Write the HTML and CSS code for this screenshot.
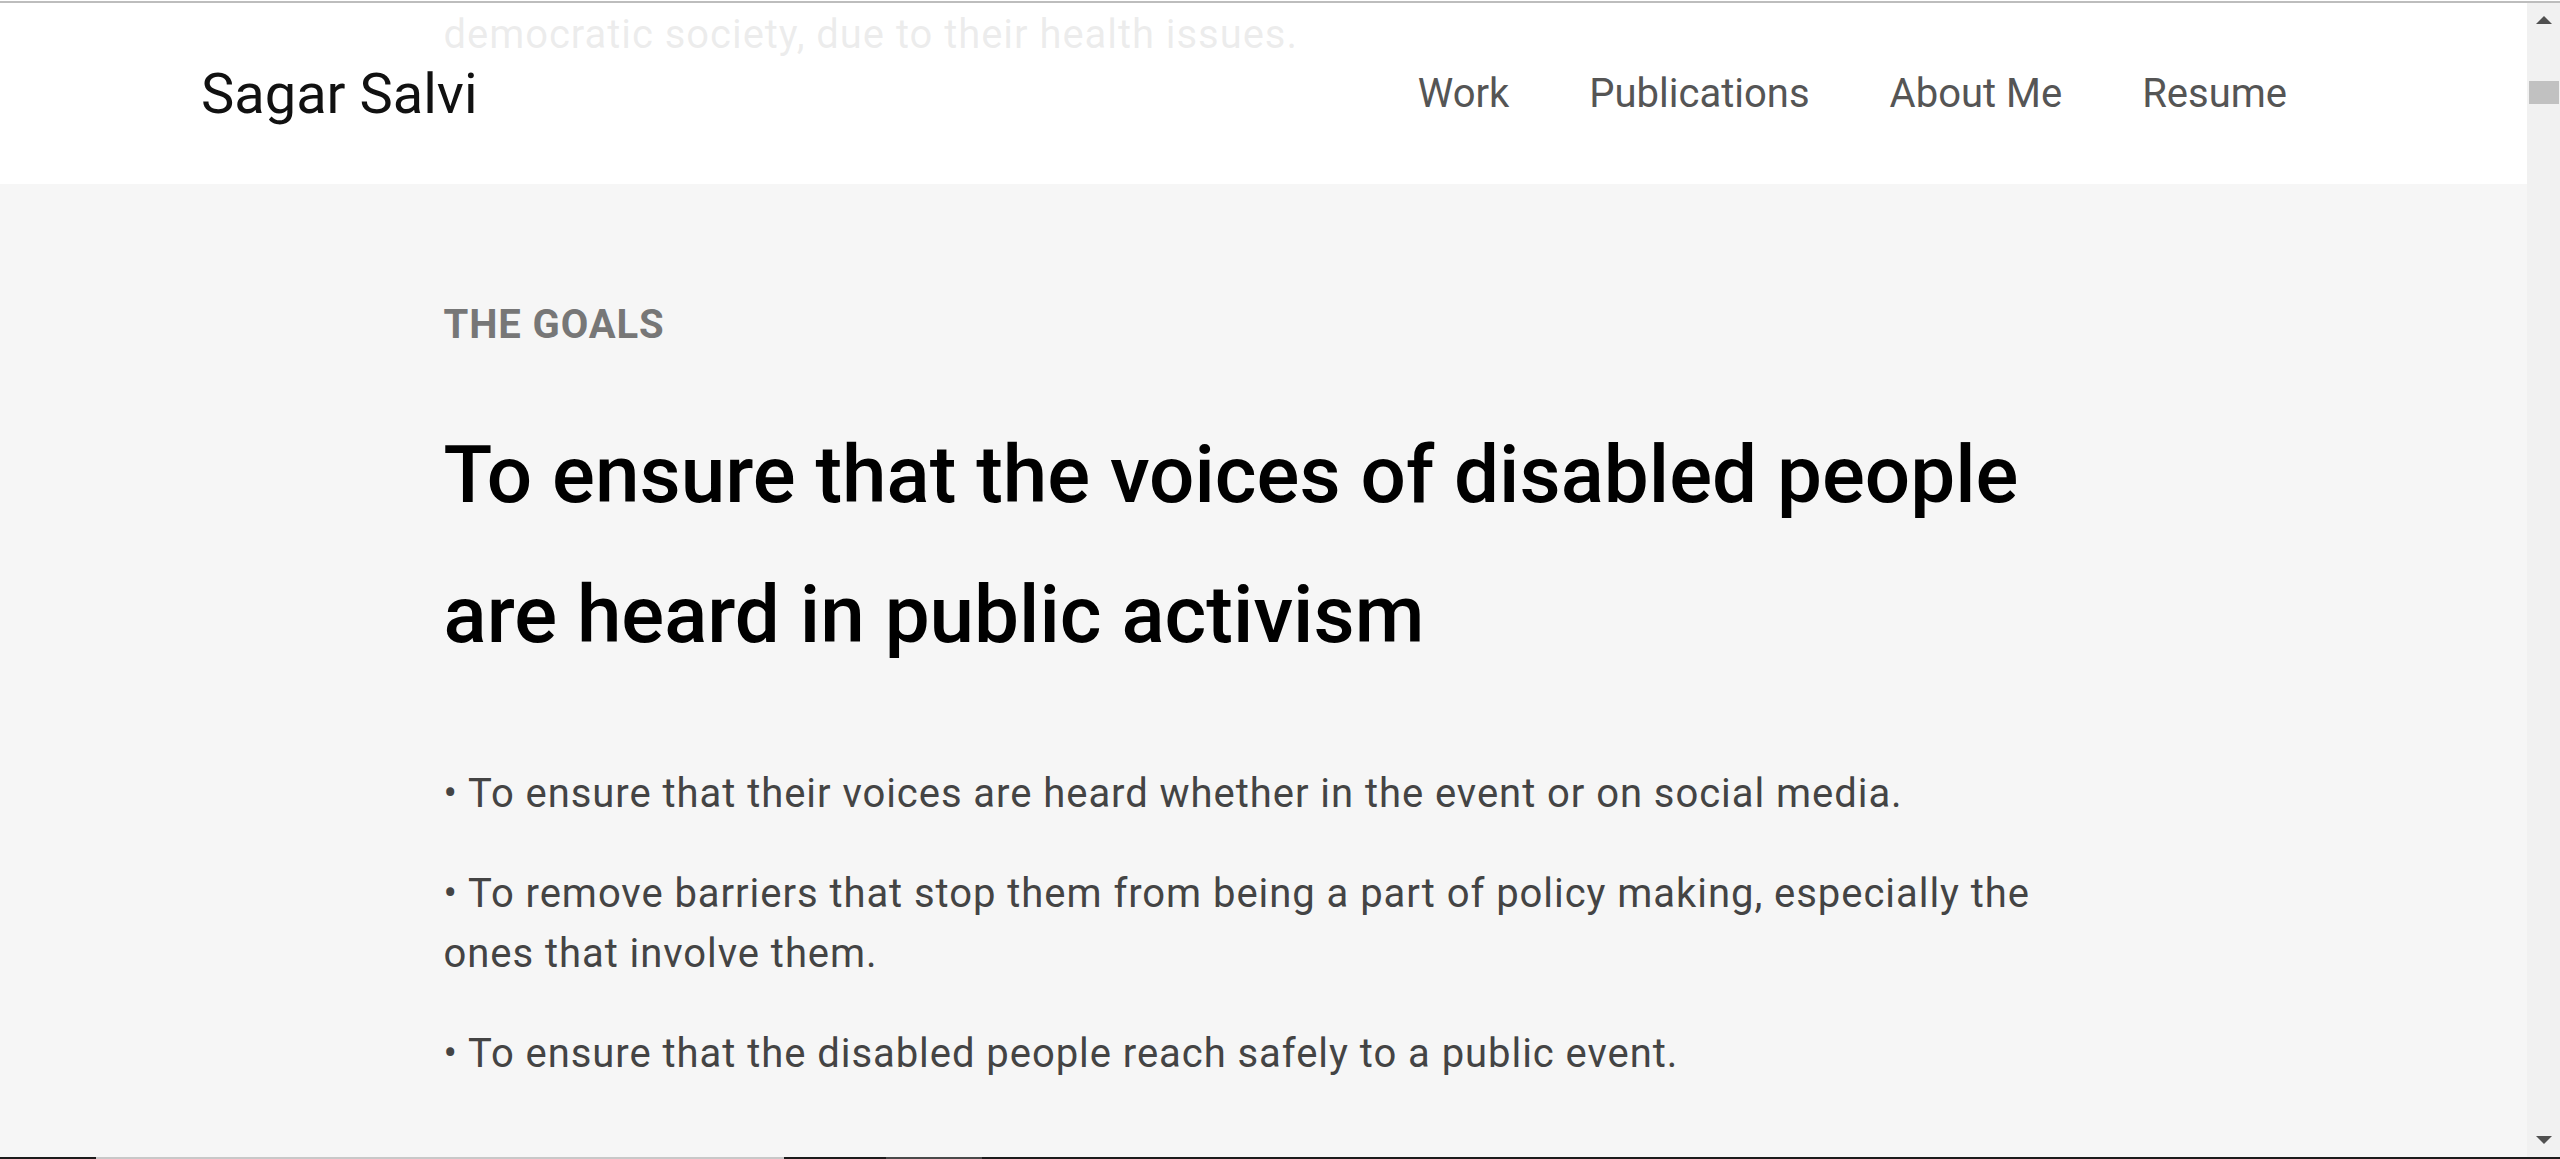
FILE: index.html
```html
<!DOCTYPE html>
<html lang="en">
<head>
<meta charset="utf-8">
<title>Sagar Salvi</title>
<link rel="stylesheet" href="styles.css">
</head>
<body>
<div class="topline"></div>
<div class="window">
  <div class="viewport">
    <header class="site-header">
      <a class="logo" href="#">Sagar Salvi</a>
      <nav class="nav">
        <a href="#">Work</a>
        <a href="#">Publications</a>
        <a href="#">About Me</a>
        <a href="#">Resume</a>
      </nav>
    </header>
    <section class="prev-section">
      <div class="container">
        <p class="body-text">democratic society, due to their health issues.</p>
      </div>
    </section>
    <section class="goals">
      <div class="container">
        <h3 class="eyebrow">THE GOALS</h3>
        <h2 class="headline">To ensure that the voices of disabled people are heard in public activism</h2>
        <div class="bullets">
          <p class="body-text">• To ensure that their voices are heard whether in the event or on social media.</p>
          <p class="body-text">• To remove barriers that stop them from being a part of policy making, especially the ones that involve them.</p>
          <p class="body-text">• To ensure that the disabled people reach safely to a public event.</p>
        </div>
      </div>
    </section>
  </div>
  <div class="scrollbar">
    <span class="arrow arrow-up"></span>
    <span class="thumb"></span>
    <span class="arrow arrow-down"></span>
  </div>
</div>
<div class="taskbar">
  <span class="seg seg-dark1"></span>
  <span class="seg seg-light"></span>
  <span class="seg seg-dark2"></span>
  <span class="seg seg-gray"></span>
  <span class="seg seg-dark3"></span>
</div>
</body>
</html>
```
FILE: styles.css
```css
* { box-sizing: border-box; }
html, body {
  margin: 0;
  padding: 0;
  width: 2560px;
  height: 1159px;
  overflow: hidden;
}
body {
  font-family: Roboto, "Liberation Sans", Arial, sans-serif;
  background: #ffffff;
}
.topline {
  height: 3px;
  border-top: 1px solid #ffffff;
  background: #bdbdbd;
}
.window {
  display: flex;
  height: 1154px;
}
.viewport {
  flex: 1;
  position: relative;
  overflow: hidden;
  background: #f6f6f6;
}
.site-header {
  position: absolute;
  top: 0;
  left: 0;
  right: 0;
  height: 181px;
  padding: 0 240px 0 201px;
  display: flex;
  align-items: center;
  justify-content: space-between;
  background: rgba(255, 255, 255, 0.9);
  z-index: 5;
}
.logo {
  font-size: 56px;
  line-height: 56px;
  color: #111111;
  text-decoration: none;
}
.nav {
  display: flex;
  gap: 80px;
}
.nav a {
  font-size: 40px;
  line-height: 40px;
  color: #555555;
  text-decoration: none;
}
.container {
  max-width: 1640px;
  margin: 0 auto;
}
.prev-section {
  background: #ffffff;
  padding: 2px 0 119px;
}
.body-text {
  margin: 0;
  font-size: 40px;
  line-height: 60px;
  letter-spacing: 0.95px;
  color: #444444;
}
.goals {
  padding-top: 111px;
}
.eyebrow {
  margin: 0;
  font-size: 40px;
  line-height: 60px;
  font-weight: 700;
  letter-spacing: 0.9px;
  color: #777777;
}
.headline {
  margin: 50px 0 0;
  font-size: 80px;
  line-height: 140px;
  font-weight: 500;
  color: #000000;
}
.bullets {
  margin-top: 79px;
  display: flex;
  flex-direction: column;
  gap: 40px;
}
.scrollbar {
  width: 33px;
  background: #f1f1f1;
  display: flex;
  flex-direction: column;
  align-items: center;
}
.arrow {
  width: 0;
  height: 0;
  border-left: 8px solid transparent;
  border-right: 8px solid transparent;
}
.arrow-up {
  margin-top: 13px;
  border-bottom: 8px solid #505050;
}
.arrow-down {
  margin-top: auto;
  margin-bottom: 13px;
  border-top: 8px solid #505050;
}
.thumb {
  margin-top: 57px;
  width: 30px;
  height: 23px;
  background: #c1c1c1;
}
.taskbar {
  display: flex;
  height: 2px;
}
.seg { height: 2px; }
.seg-dark1 { width: 96px; background: #1c1c1c; }
.seg-light { width: 688px; background: #c8c8c8; }
.seg-dark2 { width: 102px; background: #1c1c1c; }
.seg-gray { width: 96px; background: #4a4a4a; }
.seg-dark3 { flex: 1; background: #1c1c1c; }
```
